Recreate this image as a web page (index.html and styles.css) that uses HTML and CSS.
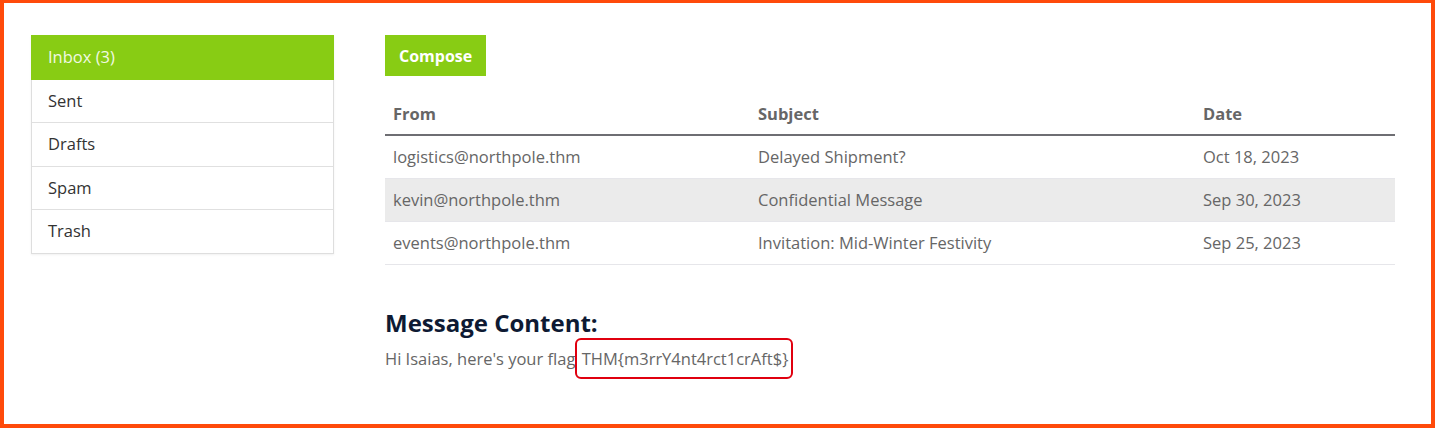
FILE: index.html
```html
<!DOCTYPE html>
<html>
<head>
<meta charset="utf-8">
<link rel="stylesheet" href="styles.css">
</head>
<body>
<div class="frame">
  <div class="layout">
    <aside class="sidebar">
      <ul class="folders">
        <li class="folder active">Inbox (3)</li>
        <li class="folder">Sent</li>
        <li class="folder">Drafts</li>
        <li class="folder">Spam</li>
        <li class="folder">Trash</li>
      </ul>
    </aside>
    <main class="main">
      <button class="compose">Compose</button>
      <table class="mails">
        <thead>
          <tr><th class="c-from">From</th><th class="c-subj">Subject</th><th class="c-date">Date</th></tr>
        </thead>
        <tbody>
          <tr><td>logistics@northpole.thm</td><td>Delayed Shipment?</td><td>Oct 18, 2023</td></tr>
          <tr class="selected"><td>kevin@northpole.thm</td><td>Confidential Message</td><td>Sep 30, 2023</td></tr>
          <tr><td>events@northpole.thm</td><td>Invitation: Mid-Winter Festivity</td><td>Sep 25, 2023</td></tr>
        </tbody>
      </table>
      <h2 class="msg-title">Message Content:</h2>
      <p class="msg-body">Hi Isaias, here's your flag<span class="flag"> THM{m3rrY4nt4rct1crAft$}</span></p>
    </main>
  </div>
</div>
</body>
</html>
```

FILE: styles.css
```css
html, body {
  margin: 0;
  padding: 0;
  background: #fff;
}
body {
  font-family: "Open Sans", "Noto Sans", sans-serif;
  font-size: 16.5px;
}
.frame {
  box-sizing: border-box;
  width: 1435px;
  height: 428px;
  border-style: solid;
  border-color: #ff4a0a;
  border-width: 3px 4px 4px 4px;
  padding: 32px 36px 0 27px;
}
.layout {
  display: flex;
  gap: 51px;
}
.sidebar {
  width: 303px;
  flex: none;
}
.folders {
  list-style: none;
  margin: 0;
  padding: 0;
  border: 1px solid #dedede;
  box-shadow: 0 1px 2px rgba(0,0,0,0.06);
}
.folder {
  padding: 10px 16px;
  line-height: 22.5px;
  color: #333;
  border-bottom: 1px solid #e0e0e0;
}
.folder:last-child { border-bottom: none; }
.folder.active {
  background: #88cc14;
  color: #f1f9e2;
  margin: -1px -1px 0 -1px;
  padding: 11px 17px 11px 17px;
  border-bottom: none;
}
.main {
  flex: 1;
  min-width: 0;
}
.compose {
  display: block;
  height: 41px;
  padding: 0 14px;
  border: none;
  background: #88cc14;
  color: #fff;
  font-family: inherit;
  font-size: 16px;
  font-weight: 700;
}
.mails {
  width: 100%;
  border-collapse: collapse;
  margin-top: 20px;
}
.mails th {
  text-align: left;
  font-weight: 700;
  color: #666;
  padding: 7px 8px 9px 8px;
  line-height: 22px;
  border-bottom: 2px solid #6e6e73;
}
.c-from { width: 349px; }
.c-subj { width: 429px; }
.mails td {
  color: #666;
  padding: 10px 8px;
  line-height: 22px;
  border-bottom: 1px solid #e6e6ea;
}
.mails tr.selected td { background: #ebebeb; }
.msg-title {
  margin: 42px 0 0 0;
  font-size: 24px;
  line-height: 32px;
  font-weight: 700;
  color: #0e1a33;
}
.msg-body {
  margin: 9px 0 0 0;
  color: #666;
  line-height: 22px;
}
.flag {
  border: 2px solid #e0000f;
  border-radius: 6px;
  padding: 7px 3px 7px 0;
}
```
